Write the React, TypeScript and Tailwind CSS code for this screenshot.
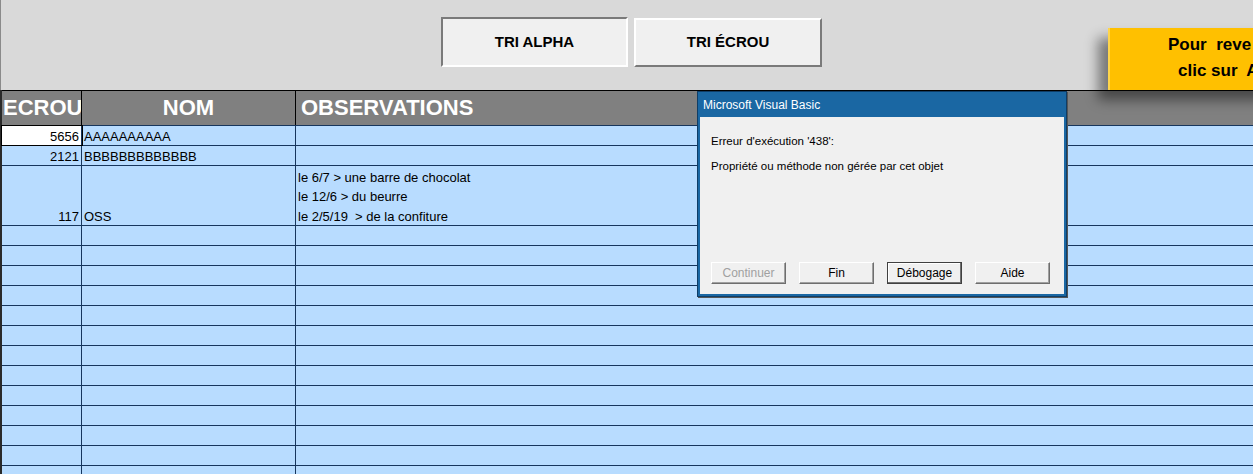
import React from 'react';

// feuille Excel + boîte d'erreur VBA
const rows = [
  { ecrou: '5656', nom: 'AAAAAAAAAA', obs: [] as string[], h: 'h-[20px]', selected: true },
  { ecrou: '2121', nom: 'BBBBBBBBBBBBB', obs: [] as string[], h: 'h-[20px]', selected: false },
  {
    ecrou: '117',
    nom: 'OSS',
    obs: ['le 6/7 > une barre de chocolat', 'le 12/6 > du beurre', 'le 2/5/19  > de la confiture'],
    h: 'h-[60px]',
    selected: false,
  },
];

const emptyRows = Array.from({ length: 13 }, (_, i) => i);

const App: React.FC = () => {
  return (
    <div
      className="relative w-[1253px] h-[474px] overflow-hidden bg-[#d9d9d9]"
      style={{ fontFamily: '"Liberation Sans", Arial, sans-serif' }}
    >
      {/* zone des boutons */}
      <div className="h-[90px] border-l border-[#8a8a8a] flex items-start pl-[440px] pt-[17px] gap-[6px]">
        <button className="w-[187px] h-[50px] bg-[#f0f0f0] border-2 border-t-[#7a7a7a] border-l-[#7a7a7a] border-b-white border-r-white text-[15px] font-bold text-black">
          TRI ALPHA
        </button>
        <button className="mt-[1px] w-[188px] h-[49px] bg-[#f0f0f0] border-2 border-t-white border-l-white border-b-[#7a7a7a] border-r-[#7a7a7a] text-[15px] font-bold text-black">
          TRI ÉCROU
        </button>
      </div>

      {/* feuille */}
      <div className="border-l-2 border-[#2a2a2a]">
        {/* en-têtes */}
        <div className="flex h-[36px] bg-[#808080] border-t border-b border-t-black border-b-[#17365d] text-white font-bold text-[22px] leading-[34px]">
          <div className="w-[80px] border-r border-black pl-[1px] overflow-hidden whitespace-nowrap">ECROU</div>
          <div className="w-[214px] border-r border-black text-center">NOM</div>
          <div className="flex-1 pl-[5px]">OBSERVATIONS</div>
        </div>

        {/* lignes */}
        {rows.map((r, i) => (
          <div key={i} className={`flex ${r.h} border-b border-[#17365d] bg-[#b8dcff] text-[13px] leading-[16px] text-black`}>
            <div
              className={`w-[80px] border-r border-[#17365d] flex items-end justify-end pr-[2px] ${
                r.selected ? 'bg-white outline outline-1 outline-black' : ''
              }`}
            >
              {r.ecrou}
            </div>
            <div className="w-[214px] border-r border-[#17365d] flex items-end pl-[2px]">{r.nom}</div>
            <div className="flex-1 flex flex-col justify-end pl-[2px]">
              {r.obs.map((o, j) => (
                <div key={j} className="h-[20px] flex items-end whitespace-pre">
                  {o}
                </div>
              ))}
            </div>
          </div>
        ))}
        {emptyRows.map(i => (
          <div key={i} className="flex h-[20px] border-b border-[#17365d] bg-[#b8dcff]">
            <div className="w-[80px] border-r border-[#17365d]" />
            <div className="w-[214px] border-r border-[#17365d]" />
            <div className="flex-1" />
          </div>
        ))}
      </div>

      {/* forme jaune */}
      <div className="absolute left-[1108px] top-[28px] w-[240px] h-[62px] bg-[#ffc000] border-l-2 border-[#ffd54a] shadow-[-10px_10px_12px_rgba(0,0,0,0.45)] text-black font-bold text-[17px] leading-[26px] pt-[4px] whitespace-pre">
        <div className="pl-[58px]">Pour  reve</div>
        <div className="pl-[68px]">clic sur  A</div>
      </div>

      {/* boîte de dialogue VBA */}
      <div className="absolute left-[697px] top-[91px] w-[370px] h-[206px] bg-[#1a67a3] border border-[#0f3d66] shadow-[1px_1px_0_#555] flex flex-col">
        <div className="h-[25px] px-[5px] flex items-center text-white text-[12px]">Microsoft Visual Basic</div>
        <div className="flex-1 mx-[2px] mb-[2px] bg-[#f0f0f0] text-[11.5px] text-black relative">
          <div className="pl-[11px] pt-[16px]">Erreur d'exécution '438':</div>
          <div className="pl-[11px] pt-[8px]">Propriété ou méthode non gérée par cet objet</div>
          <div className="absolute left-[11px] bottom-[10px] flex gap-[13px] text-[12px]">
            <div className="w-[75px] h-[22px] bg-[#f0f0f0] border border-t-white border-l-white border-b-[#6e6e6e] border-r-[#6e6e6e] shadow-[inset_-1px_-1px_0_#a0a0a0] flex items-center justify-center text-[#a0a0a0]">
              Continuer
            </div>
            <div className="w-[75px] h-[22px] bg-[#f0f0f0] border border-t-white border-l-white border-b-[#6e6e6e] border-r-[#6e6e6e] shadow-[inset_-1px_-1px_0_#a0a0a0] flex items-center justify-center">
              Fin
            </div>
            <div className="w-[75px] h-[22px] bg-[#f0f0f0] border border-[#404040] shadow-[inset_-1px_-1px_0_#707070,inset_1px_1px_0_#ffffff] flex items-center justify-center">
              Débogage
            </div>
            <div className="w-[75px] h-[22px] bg-[#f0f0f0] border border-t-white border-l-white border-b-[#6e6e6e] border-r-[#6e6e6e] shadow-[inset_-1px_-1px_0_#a0a0a0] flex items-center justify-center">
              Aide
            </div>
          </div>
        </div>
      </div>
    </div>
  );
};

export default App;
